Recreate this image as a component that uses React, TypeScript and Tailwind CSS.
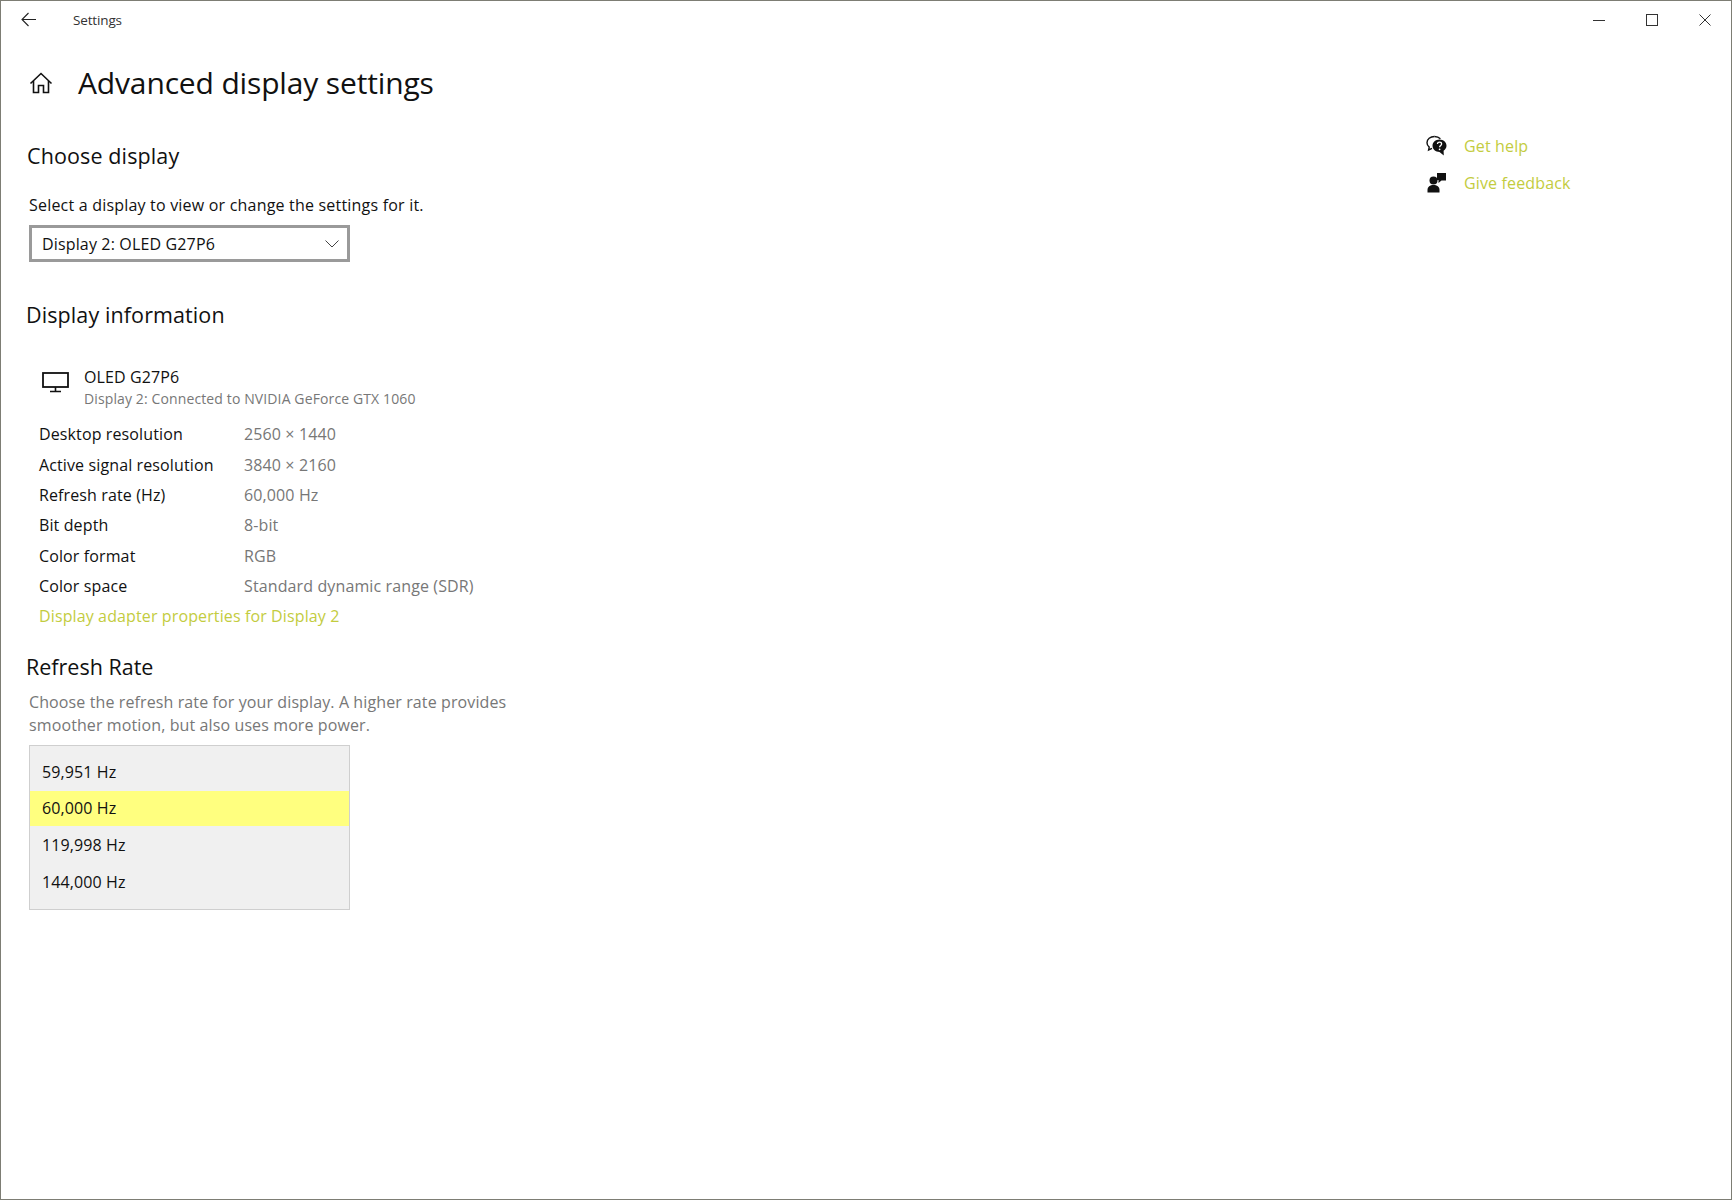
import React from "react";

function Home() {
  return (
    <svg width="24" height="24" viewBox="0 0 24 24" fill="none" stroke="#111" strokeWidth="1.6" strokeLinejoin="miter">
      <path d="M1.5 12.5 L12 2.5 L22.5 12.5" />
      <path d="M4.5 10 V21.5 H9.5 V14.5 H14.5 V21.5 H19.5 V10" />
    </svg>
  );
}

function Monitor() {
  return (
    <svg width="27" height="21" viewBox="0 0 27 21" fill="none" stroke="#111">
      <rect x="1" y="1" width="25" height="14" strokeWidth="1.8" />
      <path d="M13.5 15 V19 M8 19.5 H19" strokeWidth="1.6" />
    </svg>
  );
}

function HelpIcon() {
  return (
    <svg width="22" height="22" viewBox="0 0 22 22">
      <path d="M8.5 1.5 C4.2 1.5 1 4.2 1 7.7 C1 9.5 1.8 11 3.2 12.1 L2.6 15 L6 13.4" fill="none" stroke="#111" strokeWidth="1.4" />
      <path d="M8.5 1.5 C11 1.5 13 2.4 14.4 3.8" fill="none" stroke="#111" strokeWidth="1.4" />
      <path d="M13.5 4.5 C9.6 4.5 6.5 7.3 6.5 10.8 C6.5 14.3 9.6 17 13.5 17 L17.8 20.5 L17.6 15.8 C19.3 14.6 20.5 12.9 20.5 10.8 C20.5 7.3 17.4 4.5 13.5 4.5 Z" fill="#111" />
      <path d="M11.4 9 C11.5 7.8 12.4 7.2 13.5 7.2 C14.7 7.2 15.6 8 15.6 9 C15.6 10.4 13.6 10.5 13.6 12.2" fill="none" stroke="#fff" strokeWidth="1.3" />
      <circle cx="13.6" cy="14.3" r="0.9" fill="#fff" />
    </svg>
  );
}

function FeedbackIcon() {
  return (
    <svg width="22" height="22" viewBox="0 0 22 22" fill="#111">
      <path d="M11 1 H20 V8.5 H15.5 L12.5 11 V8 H11 Z" />
      <circle cx="7.5" cy="8.5" r="4" />
      <path d="M1.5 20.5 V18 C1.5 14.8 4 13 7.5 13 C11 13 13.5 14.8 13.5 18 V20.5 Z" />
    </svg>
  );
}

const rows = [
  ["Desktop resolution", "2560 × 1440"],
  ["Active signal resolution", "3840 × 2160"],
  ["Refresh rate (Hz)", "60,000 Hz"],
  ["Bit depth", "8-bit"],
  ["Color format", "RGB"],
  ["Color space", "Standard dynamic range (SDR)"],
];

export default function App() {
  return (
    <div className="h-[1200px] w-[1732px] overflow-hidden border border-[#7d7d74] bg-white font-['Open_Sans','Noto_Sans',sans-serif] text-[#111]">
      <header className="flex h-[38px] items-center">
        <div className="flex w-[72px] pl-[20px]">
          <svg width="16" height="16" viewBox="0 0 16 16" fill="none" stroke="#222" strokeWidth="1.1">
            <path d="M15 7.5 H1 M7.5 1 L1 7.5 L7.5 14" />
          </svg>
        </div>
        <span className="text-[13.5px] leading-[36px] tracking-[-0.15px] text-[#333]">Settings</span>
        <div className="ml-auto flex items-center">
          <div className="flex w-[53px] justify-center">
            <div className="h-[1px] w-[12px] bg-[#333]" />
          </div>
          <div className="flex w-[53px] justify-center">
            <div className="h-[12px] w-[12px] border border-[#333]" />
          </div>
          <div className="flex w-[53px] justify-center">
            <svg width="12" height="12" viewBox="0 0 12 12" stroke="#333" strokeWidth="1">
              <path d="M0.5 0.5 L11.5 11.5 M11.5 0.5 L0.5 11.5" />
            </svg>
          </div>
        </div>
      </header>

      <div className="flex">
        <main className="w-[1420px]">
          <div className="mt-[19px] flex h-[50px] items-center">
            <div className="ml-[28px] flex w-[49px]">
              <Home />
            </div>
            <h1 className="text-[30px] leading-[50px] tracking-[-0.15px]">Advanced display settings</h1>
          </div>

          <h2 className="mt-[33px] ml-[26px] text-[21.5px] leading-[30px] tracking-[0.12px]">Choose display</h2>
          <p className="mt-[22px] ml-[28px] text-[16px] leading-[24px] tracking-[0.2px]">
            Select a display to view or change the settings for it.
          </p>
          <div className="mt-[8px] ml-[28px] flex h-[37px] w-[321px] items-center justify-between border-[3px] border-[#9a9a9a] pr-[8px] pl-[10px]">
            <span className="text-[16px] tracking-[0.15px]">Display 2: OLED G27P6</span>
            <svg width="14" height="8" viewBox="0 0 14 8" fill="none" stroke="#444" strokeWidth="1">
              <path d="M0.5 0.5 L7 7 L13.5 0.5" />
            </svg>
          </div>

          <h2 className="mt-[38px] ml-[25px] text-[21.5px] leading-[30px] tracking-[0.1px]">Display information</h2>

          <div className="mt-[36px] ml-[41px] flex">
            <div className="w-[42px] pt-[6px]">
              <Monitor />
            </div>
            <div>
              <div className="text-[16px] leading-[22px] tracking-[0.1px]">OLED G27P6</div>
              <div className="text-[14px] leading-[22px] tracking-[0.12px] text-[#777]">
                Display 2: Connected to NVIDIA GeForce GTX 1060
              </div>
            </div>
          </div>

          <div className="mt-[9px] ml-[38px]">
            {rows.map(([k, v]) => (
              <div key={k} className="flex h-[30.35px] items-center text-[16px] tracking-[0.12px]">
                <span className="w-[205px]">{k}</span>
                <span className="text-[#777]">{v}</span>
              </div>
            ))}
            <div className="flex h-[30.35px] items-center text-[16px] tracking-[0.12px] text-[#c3cc3e]">
              Display adapter properties for Display 2
            </div>
          </div>

          <h2 className="mt-[21px] ml-[25px] text-[21.5px] leading-[30px]">Refresh Rate</h2>
          <p className="mt-[9px] ml-[28px] w-[500px] text-[16px] leading-[23px] tracking-[0.11px] text-[#777]">
            Choose the refresh rate for your display. A higher rate provides smoother motion, but also uses more power.
          </p>
          <div className="mt-[8px] ml-[28px] w-[321px] border border-[#cfcfcf] bg-[#f0f0f0] pt-[7px] pb-[9px] text-[16px] tracking-[0.1px]">
            {["59,951 Hz", "60,000 Hz", "119,998 Hz", "144,000 Hz"].map((h, i) => (
              <div key={h} className={`flex items-center pl-[12px] ${i === 1 ? "my-[1px] h-[34.7px] bg-[#ffff7f]" : "h-[36.7px]"}`}>
                {h}
              </div>
            ))}
          </div>
        </main>

        <aside className="pt-[88px] pl-[6px]">
          <div className="flex h-[37px] items-center">
            <div className="w-[37px] -translate-x-px"><HelpIcon /></div>
            <span className="text-[16px] tracking-[0.15px] text-[#c3cc3e]">Get help</span>
          </div>
          <div className="flex h-[37px] items-center">
            <div className="w-[37px] -translate-x-px"><FeedbackIcon /></div>
            <span className="text-[16px] tracking-[0.15px] text-[#c3cc3e]">Give feedback</span>
          </div>
        </aside>
      </div>
    </div>
  );
}
